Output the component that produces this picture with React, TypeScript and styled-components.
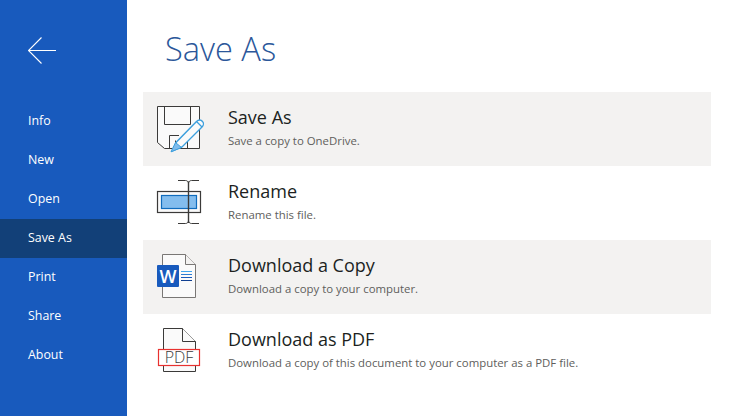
import React from "react";
import styled, { createGlobalStyle } from "styled-components";

const Global = createGlobalStyle`
  html, body { margin: 0; padding: 0; background: #fff; }
  body { font-family: "Open Sans", "Noto Sans", "Liberation Sans", sans-serif; overflow: hidden; }
`;

const Page = styled.div`
  display: flex;
  width: 743px;
  height: 416px;
  overflow: hidden;
`;

const Sidebar = styled.nav`
  width: 127px;
  flex: none;
  background: #185abd;
  display: flex;
  flex-direction: column;
`;

const BackButton = styled.div`
  height: 102px;
  padding: 37px 0 0 28px;
  box-sizing: border-box;
  color: #fff;
  line-height: 0;
`;

const NavItem = styled.div<{ $active?: boolean }>`
  height: 39px;
  line-height: 37px;
  padding-left: 28px;
  font-size: 12.4px;
  color: #fff;
  background: ${(p) => (p.$active ? "#124078" : "transparent")};
`;

const Main = styled.main`
  flex: 1;
  padding-left: 16px;
  padding-right: 32px;
`;

const Title = styled.h1`
  margin: 0;
  height: 92px;
  box-sizing: border-box;
  padding: 26px 0 0 22px;
  font-size: 32.6px;
  line-height: 46px;
  font-weight: 300;
  color: #2b579a;
`;

const Row = styled.div<{ $shaded?: boolean }>`
  display: flex;
  height: 74px;
  padding: 12px 0 0 12px;
  box-sizing: border-box;
  background: ${(p) => (p.$shaded ? "#f3f2f1" : "transparent")};
`;

const IconBox = styled.div`
  width: 73px;
  flex: none;
  line-height: 0;
`;

const RowText = styled.div`
  display: flex;
  flex-direction: column;
`;

const RowTitle = styled.div`
  font-size: 18px;
  line-height: 26px;
  color: #201f1e;
`;

const RowSub = styled.div`
  font-size: 11.4px;
  line-height: 16px;
  margin-top: 3px;
  color: #605e5c;
`;

const Back = () => (
  <svg width="30" height="28" viewBox="0 0 30 28" fill="none" stroke="#fff" strokeWidth="1.1">
    <path d="M0.5 13.5H28M13.5 0.5L0.5 13.5L13.5 26.5" />
  </svg>
);

const SaveIcon = () => (
  <svg width="50" height="50" viewBox="0 0 50 50" fill="none">
    <path d="M2.5 2.5H44.5V44.5H9.5L2.5 38.5Z" fill="#fafafa" stroke="#3b3a39" />
    <path d="M9.5 2.5V20.5H35.5V2.5" stroke="#3b3a39" />
    <path d="M14.5 44.5V31.5H24M20.5 44.5V36.5M32.5 44.5V37" stroke="#3b3a39" />
    <path d="M17.5 47L21.5 38L41.5 17.5C43.5 15.5 46 15.5 47.5 17.5C49 19 48.5 21.5 47 23L27 43Z" fill="#fafafa" stroke="#3c9fdd" strokeWidth="1.4" />
    <path d="M16 47.8L20.5 38.5L26.5 43.5Z" fill="#7fbcec" stroke="#3c9fdd" />
    <path d="M41.5 17.5L47 23" stroke="#3c9fdd" strokeWidth="1.2" />
  </svg>
);

const RenameIcon = () => (
  <svg width="50" height="50" viewBox="0 0 50 50" fill="none">
    <rect x="2.5" y="13.5" width="43" height="21" fill="#fafafa" stroke="#3b3a39" strokeWidth="1.2" />
    <rect x="6.5" y="17.5" width="35" height="13" fill="#83bdee" stroke="#0f6cbd" strokeWidth="1.2" />
    <path d="M33.5 3.5V45" stroke="#3b3a39" strokeWidth="1.4" />
    <path d="M23 2.5H30.5C32 2.5 33.5 3.5 33.5 5.5C33.5 3.5 35 2.5 36.5 2.5H44M23 45.5H30.5C32 45.5 33.5 44.5 33.5 42.5C33.5 44.5 35 45.5 36.5 45.5H44" stroke="#3b3a39" />
  </svg>
);

const WordIcon = () => (
  <svg width="50" height="50" viewBox="0 0 50 50" fill="none">
    <path d="M7.5 2.5H30.5L40.5 12.5V45.5H7.5Z" fill="#fafafa" stroke="#797775" />
    <path d="M30.5 2.5V12.5H40.5" fill="#f3f2f1" stroke="#797775" />
    <rect x="2" y="13" width="22" height="22" rx="1" fill="#185abd" />
    <text x="13" y="30.5" textAnchor="middle" fontFamily="'Open Sans', sans-serif" fontWeight="600" fontSize="18" fill="#fff">W</text>
    <path d="M26 19.5H37" stroke="#41a5ee" />
    <path d="M26 22.5H37" stroke="#2b7cd3" />
    <path d="M26 25.5H37" stroke="#185abd" />
    <path d="M26 28.5H37" stroke="#103f91" />
  </svg>
);

const PdfIcon = () => (
  <svg width="50" height="50" viewBox="0 0 50 50" fill="none">
    <path d="M8.5 2.5H27.5L40.5 15.5V45.5H8.5Z" fill="#fafafa" stroke="#3b3a39" />
    <path d="M27.5 2.5V15.5H40.5" fill="#fafafa" stroke="#3b3a39" />
    <rect x="3.5" y="23.5" width="41" height="16" fill="#fff" stroke="#e8312f" strokeWidth="1.2" />
    <text x="24" y="37" textAnchor="middle" fontFamily="'Open Sans', sans-serif" fontWeight="300" fontSize="16" fill="#3b3a39">PDF</text>
  </svg>
);

const nav = ["Info", "New", "Open", "Save As", "Print", "Share", "About"];

const rows = [
  { title: "Save As", sub: "Save a copy to OneDrive.", Icon: SaveIcon, shaded: true },
  { title: "Rename", sub: "Rename this file.", Icon: RenameIcon, shaded: false },
  { title: "Download a Copy", sub: "Download a copy to your computer.", Icon: WordIcon, shaded: true },
  { title: "Download as PDF", sub: "Download a copy of this document to your computer as a PDF file.", Icon: PdfIcon, shaded: false },
];

export default function App() {
  return (
    <Page>
      <Global />
      <Sidebar>
        <BackButton><Back /></BackButton>
        {nav.map((n) => (
          <NavItem key={n} $active={n === "Save As"}>{n}</NavItem>
        ))}
      </Sidebar>
      <Main>
        <Title>Save As</Title>
        {rows.map(({ title, sub, Icon, shaded }) => (
          <Row key={title} $shaded={shaded}>
            <IconBox><Icon /></IconBox>
            <RowText>
              <RowTitle>{title}</RowTitle>
              <RowSub>{sub}</RowSub>
            </RowText>
          </Row>
        ))}
      </Main>
    </Page>
  );
}
